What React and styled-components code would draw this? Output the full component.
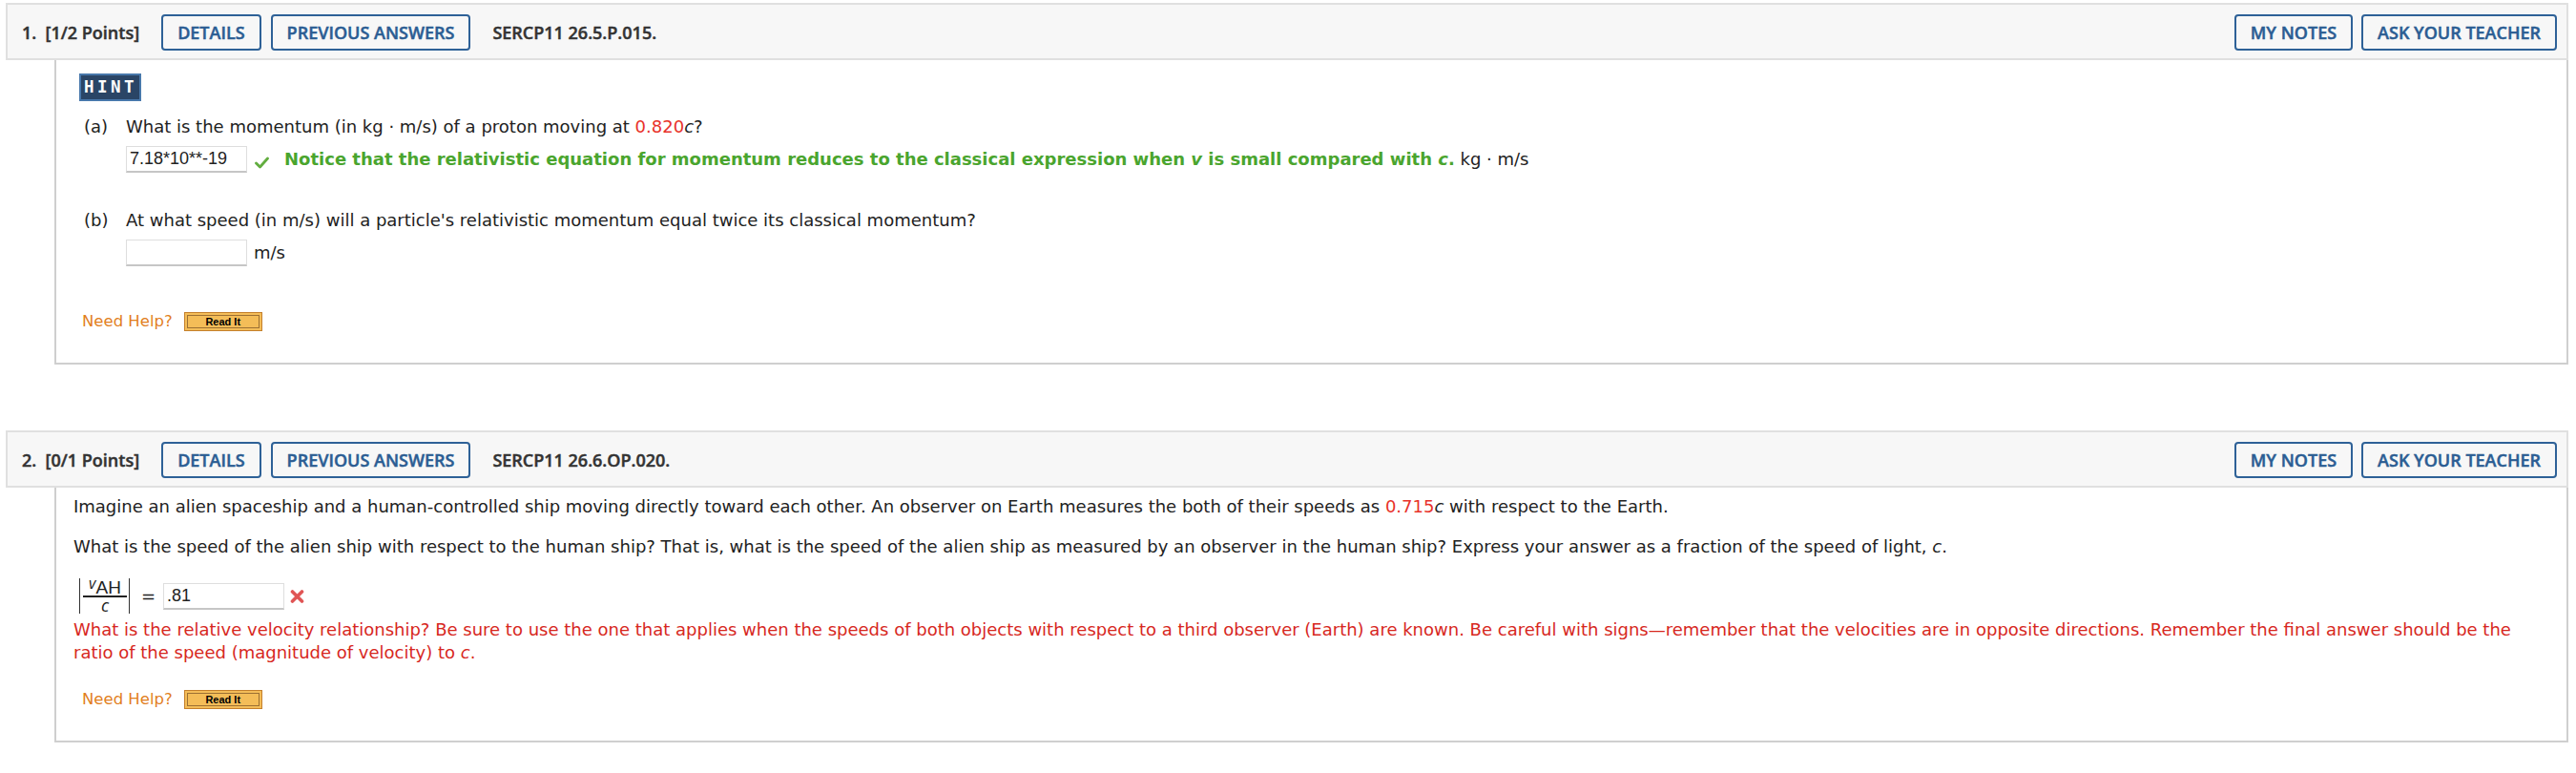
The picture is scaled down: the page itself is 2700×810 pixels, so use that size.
import React from 'react';
import styled, { createGlobalStyle } from 'styled-components';

const GlobalStyle = createGlobalStyle`
  body {
    margin: 0;
    background: #fff;
    font-family: "DejaVu Sans", Verdana, sans-serif;
    color: #222;
  }
`;

const CheckIcon = () => (
  <svg width="15" height="13" viewBox="0 0 15 13">
    <path d="M1.5 7 L5.5 11 L13.5 2" fill="none" stroke="#62ad3f" strokeWidth="2.8" strokeLinecap="round" strokeLinejoin="round" />
  </svg>
);

const CrossIcon = () => (
  <svg width="15" height="14" viewBox="0 0 15 14">
    <path d="M2.5 2 L12.5 12 M12.5 2 L2.5 12" fill="none" stroke="#e05555" strokeWidth="3.6" strokeLinecap="round" />
  </svg>
);

const Header = ({ number, points, code }) => (
  <HeaderBar>
    <PointsLabel>{number}.  [{points} Points]</PointsLabel>
    <HeaderButton>DETAILS</HeaderButton>
    <HeaderButton>PREVIOUS ANSWERS</HeaderButton>
    <Code>{code}</Code>
    <RightGroup>
      <HeaderButton>MY NOTES</HeaderButton>
      <HeaderButton>ASK YOUR TEACHER</HeaderButton>
    </RightGroup>
  </HeaderBar>
);

const NeedHelp = ({ top }) => (
  <HelpRow top={top}>
    <HelpText>Need Help?</HelpText>
    <ReadIt>
      <ReadItInner>Read It</ReadItInner>
    </ReadIt>
  </HelpRow>
);

const App = () => {
  return (
    <Page>
      <GlobalStyle />

      <Card>
        <Header number="1" points="1/2" code="SERCP11 26.5.P.015." />
        <Body top={14}>
          <Content>
            <HintBadge>HINT</HintBadge>

            <Part top={15}>
              <PartLabel>(a)</PartLabel>
              <Question>
                What is the momentum (in kg · m/s) of a proton moving at <Red>0.820</Red><Var>c</Var>?
              </Question>
              <AnswerRow>
                <AnswerInput readOnly defaultValue="7.18*10**-19" />
                <IconSlot><CheckIcon /></IconSlot>
                <span>
                  <Correct>
                    Notice that the relativistic equation for momentum reduces to the classical expression when <Var>v</Var> is small compared with <Var>c</Var>.
                  </Correct>{' '}
                  kg · m/s
                </span>
              </AnswerRow>
            </Part>

            <Part top={38}>
              <PartLabel>(b)</PartLabel>
              <Question>
                At what speed (in m/s) will a particle's relativistic momentum equal twice its classical momentum?
              </Question>
              <AnswerRow>
                <AnswerInput readOnly defaultValue="" />
                <Unit>m/s</Unit>
              </AnswerRow>
            </Part>
          </Content>
          <NeedHelp top={46} />
        </Body>
      </Card>

      <Card>
        <Header number="2" points="0/1" code="SERCP11 26.6.OP.020." />
        <Body top={8}>
          <Paragraph>
            Imagine an alien spaceship and a human-controlled ship moving directly toward each other. An observer on Earth measures the both of their speeds as <Red>0.715</Red><Var>c</Var> with respect to the Earth.
          </Paragraph>
          <Paragraph top={18}>
            What is the speed of the alien ship with respect to the human ship? That is, what is the speed of the alien ship as measured by an observer in the human ship? Express your answer as a fraction of the speed of light, <Var>c</Var>.
          </Paragraph>

          <FractionRow>
            <Abs>
              <Fraction>
                <Numerator><SubV>v</SubV>AH</Numerator>
                <Denominator>c</Denominator>
              </Fraction>
            </Abs>
            <Equals>=</Equals>
            <AnswerInput readOnly defaultValue=".81" />
            <CrossSlot><CrossIcon /></CrossSlot>
          </FractionRow>

          <WrongText>
            What is the relative velocity relationship? Be sure to use the one that applies when the speeds of both objects with respect to a third observer (Earth) are known. Be careful with signs—remember that the velocities are in opposite directions. Remember the final answer should be the ratio of the speed (magnitude of velocity) to <Var>c</Var>.
          </WrongText>

          <NeedHelp top={25} />
        </Body>
      </Card>
    </Page>
  );
};

const Page = styled.div`
  padding: 3px 0 0 6px;
  width: 2686px;
`;

const Card = styled.section`
  & + & {
    margin-top: 69px;
  }
`;

const HeaderBar = styled.div`
  display: flex;
  align-items: center;
  gap: 10px;
  height: 60px;
  box-sizing: border-box;
  padding: 2px 10px 0 15px;
  background: #f7f7f7;
  border: 2px solid #e0e0e0;
  font-family: "Open Sans", sans-serif;
  font-weight: 600;
  font-size: 18px;
  color: #333;
  -webkit-text-stroke: 0.45px currentColor;
`;

const PointsLabel = styled.span`
  white-space: pre;
  margin-right: 13px;
`;

const Code = styled.span`
  margin-left: 13px;
`;

const RightGroup = styled.div`
  display: flex;
  gap: 9px;
  margin-left: auto;
`;

const HeaderButton = styled.button`
  height: 38px;
  box-sizing: border-box;
  padding: 0 15px;
  border: 2px solid #2e6197;
  border-radius: 4px;
  background: transparent;
  color: #2b5d93;
  font: inherit;
  white-space: nowrap;
  -webkit-text-stroke: inherit;
`;

const Body = styled.div`
  margin-left: 51px;
  border: 2px solid #cfcfcf;
  border-top: none;
  padding: ${p => p.top}px 18px 31px 18px;
  font-size: 18px;
  line-height: 24px;
  color: #222;
`;

const Content = styled.div`
  padding-left: 6px;
`;

const HintBadge = styled.div`
  display: inline-block;
  box-sizing: border-box;
  height: 29px;
  padding: 0 2px 0 3px;
  background: #2a4566;
  border: 2px solid #4878ab;
  color: #fff;
  font-family: "DejaVu Sans Mono", monospace;
  font-weight: bold;
  font-size: 17.5px;
  line-height: 25px;
  letter-spacing: 3.5px;
  vertical-align: top;
`;

const Part = styled.div`
  display: grid;
  grid-template-columns: 44px 1fr;
  row-gap: 8px;
  margin: ${p => p.top}px 0 0 5px;
`;

const PartLabel = styled.span``;

const Question = styled.span``;

const Var = styled.i``;

const AnswerRow = styled.div`
  grid-column: 2;
  display: flex;
  align-items: center;
`;

const AnswerInput = styled.input`
  width: 127px;
  height: 28px;
  box-sizing: border-box;
  padding: 0 3px;
  border: 1px solid #dedede;
  border-bottom: 2px solid #c6c6c6;
  background: #fff;
  font-family: "Liberation Sans", Arial, sans-serif;
  font-size: 18px;
  color: #222;
  outline: none;
`;

const IconSlot = styled.span`
  display: inline-flex;
  margin: 6px 16px 0 8px;
`;

const Correct = styled.span`
  color: #4aa52e;
  font-weight: bold;
`;

const Unit = styled.span`
  margin-left: 7px;
`;

const Red = styled.span`
  color: #e8322a;
`;

const Paragraph = styled.p`
  margin: ${p => p.top || 0}px 0 0;
`;

const FractionRow = styled.div`
  display: flex;
  align-items: center;
  margin: 21px 0 0 6px;
`;

const Abs = styled.div`
  display: flex;
  height: 37px;
  padding: 0 2px 0 3px;
  border-left: 1.5px solid #333;
  border-right: 1.5px solid #333;
`;

const Fraction = styled.div`
  display: flex;
  flex-direction: column;
  align-items: center;
  width: 46px;
`;

const Numerator = styled.div`
  height: 20px;
  width: 100%;
  box-sizing: border-box;
  border-bottom: 2px solid #222;
  text-align: center;
  font-family: "Liberation Sans", Arial, sans-serif;
  font-size: 19px;
  line-height: 20px;
`;

const SubV = styled.i`
  font-family: "Open Sans", sans-serif;
  font-size: 16px;
  position: relative;
  top: -5px;
`;

const Denominator = styled.i`
  font-family: "Open Sans", sans-serif;
  font-size: 18px;
  line-height: 17px;
`;

const Equals = styled.span`
  margin: 0 8px 0 12px;
  font-size: 18px;
`;

const CrossSlot = styled.span`
  display: inline-flex;
  margin-left: 6px;
`;

const WrongText = styled.p`
  margin: 5px 0 0;
  color: #d7281e;
`;

const HelpRow = styled.div`
  display: flex;
  align-items: center;
  gap: 12px;
  height: 24px;
  margin: ${p => p.top}px 0 0 9px;
`;

const HelpText = styled.span`
  color: #e27f1e;
  font-size: 16.5px;
`;

const ReadIt = styled.div`
  width: 82px;
  height: 20px;
  box-sizing: border-box;
  padding: 2px;
  border: 1px solid #c4802c;
  background: #f4bd58;
`;

const ReadItInner = styled.div`
  height: 100%;
  box-sizing: border-box;
  border: 1px solid #9c7034;
  color: #000;
  font-family: "Liberation Sans", Arial, sans-serif;
  font-weight: bold;
  font-size: 11px;
  line-height: 12px;
  text-align: center;
`;

export default App;
